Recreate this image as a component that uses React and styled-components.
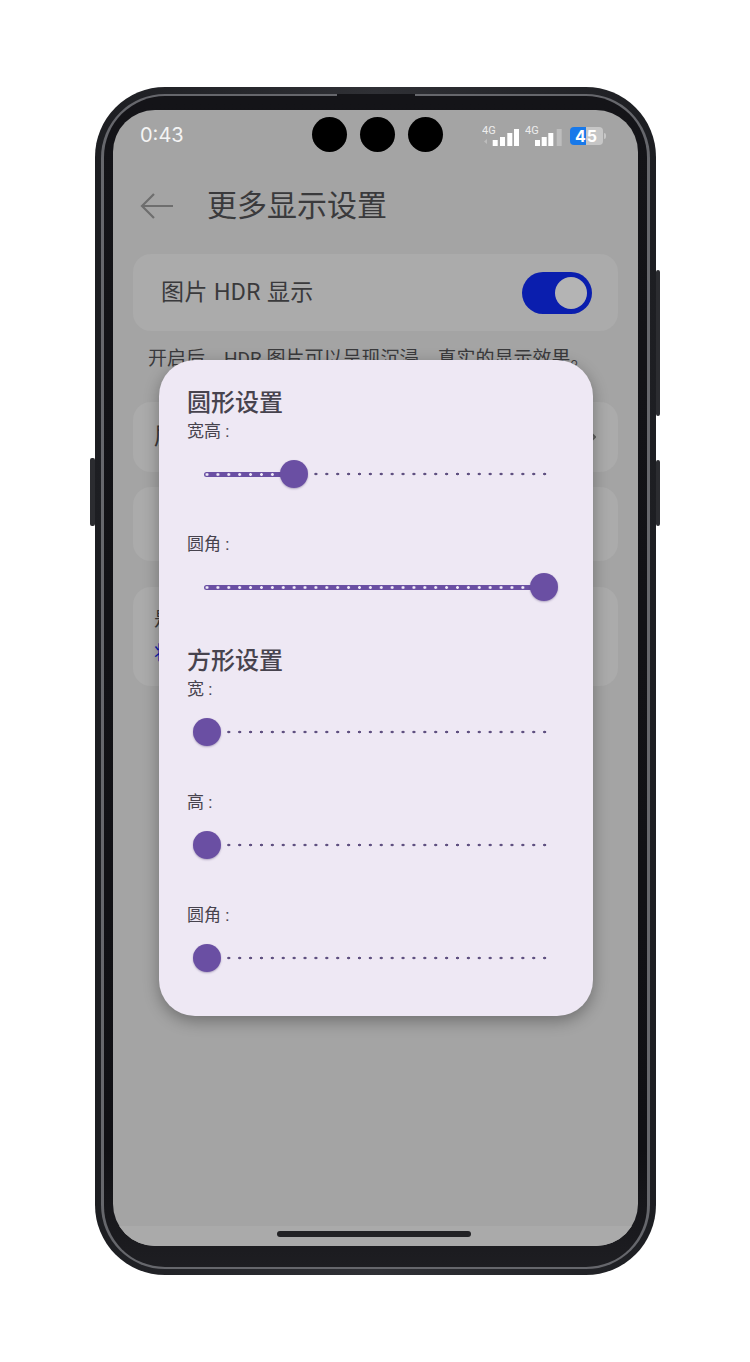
import React from 'react'
import styled, { createGlobalStyle } from 'styled-components'

const GlobalStyle = createGlobalStyle`
	html, body {
		margin: 0;
		padding: 0;
		background-color: #ffffff;
		font-family: Roboto, "Noto Sans CJK SC", sans-serif;
	}
	* {
		box-sizing: border-box;
	}
`

const Page = styled.div`
	width: 750px;
	height: 1362px;
	padding: 87px 94px 0 95px;
	overflow: hidden;
`
const Phone = styled.div`
	position: relative;
	width: 561px;
	height: 1188px;
	padding: 7px 6px 6px;
	border-radius: 70px;
	background: linear-gradient(90deg, #1d1e22, #2f3035 50%, #1d1e22);
`
const SideButton = styled.div`
	position: absolute;
	top: ${(p) => p.top}px;
	${(p) => (p.right ? 'right: -4px;' : 'left: -5px;')}
	width: ${(p) => (p.right ? 4 : 5)}px;
	height: ${(p) => p.height}px;
	background-color: #2b2c30;
	border-radius: 2px;
`
const Ring = styled.div`
	height: 100%;
	padding: 2px 3px;
	border-radius: 64px;
	background-color: #66676c;
`
const Bezel = styled.div`
	position: relative;
	height: 100%;
	padding: 14px 9px 21px;
	border-radius: 61px;
	background: linear-gradient(180deg, #141418, #101014 90%, #1e1e22);
`
const TopSlot = styled.div`
	position: absolute;
	top: -2px;
	left: 233px;
	width: 78px;
	height: 6px;
	background-color: #141418;
	border-radius: 0 0 4px 4px;
`
const Screen = styled.div`
	position: relative;
	height: 100%;
	border-radius: 42px;
	overflow: hidden;
	background-color: #a4a4a4;
	display: flex;
	flex-direction: column;
`
const StatusBar = styled.div`
	height: 48px;
	padding: 0 32px 0 27px;
	display: flex;
	align-items: center;
`
const Time = styled.span`
	width: 172px;
	margin-top: 2px;
	font-family: Inter, sans-serif;
	font-size: 20px;
	color: #f4f4f4;
`
const Holes = styled.div`
	display: flex;
	gap: 13px;
`
const Hole = styled.div`
	width: 35px;
	height: 35px;
	border-radius: 50%;
	background-color: #000000;
`
const StatusIcons = styled.div`
	display: flex;
	align-items: center;
	gap: 5px;
	margin: 4px 0 0 auto;
`
const Battery = styled.div`
	display: flex;
	align-items: center;
	margin-left: 2px;
`
const BatteryBody = styled.div`
	width: 33px;
	height: 18px;
	border-radius: 4px;
	background: linear-gradient(90deg, #1879ea 0 16px, #c6c6c6 16px);
	color: #ffffff;
	font-family: Inter, sans-serif;
	font-size: 16px;
	font-weight: 700;
	line-height: 18px;
	letter-spacing: 1px;
	text-align: center;
`
const BatteryNub = styled.div`
	width: 2px;
	height: 6px;
	margin-left: 1px;
	border-radius: 0 2px 2px 0;
	background-color: #c6c6c6;
`
const Header = styled.div`
	height: 68px;
	padding: 28px 0 0 27px;
	display: flex;
	align-items: center;
	gap: 33px;
`
const Title = styled.h1`
	margin: 0;
	font-size: 30px;
	font-weight: 400;
	line-height: 40px;
	color: #3a3a3c;
`
const Content = styled.div`
	flex: 1;
	padding: 28px 20px 0;
	display: flex;
	flex-direction: column;
`
const Card = styled.div`
	height: ${(p) => p.height}px;
	margin-bottom: ${(p) => p.gap}px;
	padding: ${(p) => p.pad};
	border-radius: 18px;
	background-color: #ababab;
	display: flex;
	flex-direction: ${(p) => (p.stack ? 'column' : 'row')};
	align-items: ${(p) => (p.stack ? 'flex-start' : 'center')};
	justify-content: ${(p) => (p.stack ? 'flex-start' : 'space-between')};
`
const RowText = styled.span`
	font-size: 23px;
	line-height: 30px;
	letter-spacing: 0.4px;
	color: #3a3a3c;
`
const Toggle = styled.div`
	width: 70px;
	height: 42px;
	padding: 5px;
	border-radius: 21px;
	background-color: #0a1eae;
	display: flex;
	justify-content: flex-end;
`
const Knob = styled.div`
	width: 32px;
	height: 32px;
	border-radius: 50%;
	background-color: #b4b4b4;
`
const Caption = styled.p`
	margin: 15px 0 30px 15px;
	font-size: 19px;
	line-height: 26px;
	color: #3a3a3c;
	white-space: nowrap;
`
const SmallText = styled.span`
	font-size: 19px;
	line-height: 34px;
	color: ${(p) => (p.link ? '#0a1eae' : '#3a3a3c')};
`
const NavBar = styled.div`
	height: 20px;
	background-color: #aaaaaa;
	display: flex;
	justify-content: center;
	padding: 5px 3px 0 0;
`
const Handle = styled.div`
	width: 194px;
	height: 6px;
	border-radius: 3px;
	background-color: #222225;
`
const Dialog = styled.div`
	position: absolute;
	top: 250px;
	left: 46px;
	width: 434px;
	height: 656px;
	padding: 28px 0 0 28px;
	border-radius: 36px;
	background-color: #eee8f4;
	box-shadow: 0 5px 16px rgba(0, 0, 0, 0.32);
`
const SectionTitle = styled.h2`
	margin: ${(p) => (p.second ? '2px' : '0')} 0 0;
	font-size: 24px;
	font-weight: 500;
	line-height: 30px;
	color: #47434e;
`
const Field = styled.div`
	height: 113px;
`
const FieldLabel = styled.div`
	height: 28px;
	font-size: 17px;
	line-height: 26px;
	color: #47434e;
	white-space: pre;
`
const Slider = styled.div`
	position: relative;
	width: 343px;
	height: 56px;
	margin-left: 17px;
`
const Track = styled.div`
	position: absolute;
	top: 26px;
	left: 2px;
	width: 342px;
	height: 4px;
	background-image: radial-gradient(circle at center, #5f5080 1.2px, transparent 1.6px);
	background-size: 10.9px 4px;
	background-position: -4.45px 0;
	background-repeat: repeat-x;
`
const ActiveTrack = styled.div`
	position: absolute;
	top: 25.5px;
	left: 0;
	height: 5px;
	border-radius: 2.5px;
	background-color: #6a4fa3;
	background-image: radial-gradient(circle at center, #f1ecf8 1.2px, transparent 1.6px);
	background-size: 10.9px 5px;
	background-position: -2.45px 0;
	background-repeat: repeat-x;
`
const Thumb = styled.div`
	position: absolute;
	top: 14px;
	width: 28px;
	height: 28px;
	margin-left: -14px;
	border-radius: 50%;
	background-color: #6a4fa3;
	box-shadow: 0 1px 2px rgba(60, 40, 100, 0.35);
`

const SLIDER_START = 3
const SLIDER_RANGE = 337

const RangeField = ({ label, value }) => {
	const x = SLIDER_START + SLIDER_RANGE * value
	return (
		<Field>
			<FieldLabel>{label}</FieldLabel>
			<Slider>
				<Track />
				{value > 0 && <ActiveTrack style={{ width: x }} />}
				<Thumb style={{ left: x }} />
			</Slider>
		</Field>
	)
}

const BackArrow = () => (
	<svg width="34" height="28" viewBox="0 0 34 28" fill="none" stroke="#6e6e6e" strokeWidth="2.2">
		<path d="M33 14H2" />
		<path d="M14 2L2 14l12 12" />
	</svg>
)

const Chevron = () => (
	<svg width="8" height="14" viewBox="0 0 8 14" fill="none" stroke="#5e5e5e" strokeWidth="2">
		<path d="M1 1l6 6-6 6" />
	</svg>
)

// bar tuples: x, height, colour
const Signal = ({ bars, arrow }) => (
	<svg width="38" height="22" viewBox="0 0 38 22">
		<text x="0" y="9" fontSize="11" fontFamily="Roboto, sans-serif" fill="#ededed">4G</text>
		{arrow && <path d="M5 14l-3 2.500 3 2.500z" fill="#bdbdbd" />}
		{bars.map(([x, h, c]) => (
			<rect key={x} x={x} y={21 - h} width="5" height={h} fill={c} />
		))}
	</svg>
)

const SIGNAL_ONE = [[10.7, 6, '#fff'], [18, 9, '#fff'], [25.3, 13, '#fff'], [32, 17, '#fff']]
const SIGNAL_TWO = [[10, 6, '#fff'], [16.7, 9, '#fff'], [23.3, 13, '#fff'], [31.7, 17, '#bdbdbd']]

class App extends React.Component {
	render() {
		return (
			<Page>
				<GlobalStyle />
				<Phone>
					<SideButton top={371} height={68} />
					<SideButton right top={183} height={146} />
					<SideButton right top={373} height={66} />
					<Ring>
						<Bezel>
							<TopSlot />
							<Screen>
								<StatusBar>
									<Time>0:43</Time>
									<Holes>
										<Hole />
										<Hole />
										<Hole />
									</Holes>
									<StatusIcons>
										<Signal bars={SIGNAL_ONE} arrow />
										<Signal bars={SIGNAL_TWO} />
										<Battery>
											<BatteryBody>45</BatteryBody>
											<BatteryNub />
										</Battery>
									</StatusIcons>
								</StatusBar>
								<Header>
									<BackArrow />
									<Title>更多显示设置</Title>
								</Header>
								<Content>
									<Card height={77} gap={0} pad="0 26px 0 28px">
										<RowText>图片 HDR 显示</RowText>
										<Toggle>
											<Knob />
										</Toggle>
									</Card>
									<Caption>开启后，HDR 图片可以呈现沉浸、真实的显示效果。</Caption>
									<Card height={70} gap={15} pad="0 22px 0 21px">
										<RowText>屏幕</RowText>
										<Chevron />
									</Card>
									<Card height={74} gap={26} pad="0" />
									<Card height={99} gap={0} pad="16px 21px" stack>
										<SmallText>是否开启</SmallText>
										<SmallText link>将在应用</SmallText>
									</Card>
								</Content>
								<NavBar>
									<Handle />
								</NavBar>
								<Dialog>
									<SectionTitle>圆形设置</SectionTitle>
									<RangeField label="宽高 :" value={0.258} />
									<RangeField label="圆角 :" value={1} />
									<SectionTitle second>方形设置</SectionTitle>
									<RangeField label="宽 :" value={0} />
									<RangeField label="高 :" value={0} />
									<RangeField label="圆角 :" value={0} />
								</Dialog>
							</Screen>
						</Bezel>
					</Ring>
				</Phone>
			</Page>
		)
	}
}

export default App
